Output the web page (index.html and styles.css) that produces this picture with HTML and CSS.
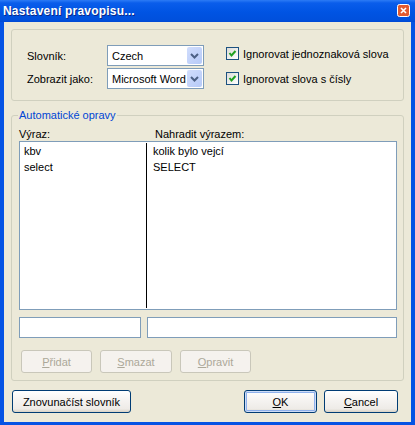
FILE: index.html
```html
<!DOCTYPE html>
<html>
<head>
<meta charset="utf-8">
<link rel="stylesheet" href="styles.css">
</head>
<body>
<div class="window">
  <div class="titlebar">
    <span class="title">Nastavení pravopisu...</span>
    <div class="close"><svg width="13" height="13" viewBox="0 0 13 13"><rect x="0.5" y="0.5" width="12" height="12" rx="2" fill="#E25A2F" stroke="#FFFFFF" stroke-width="1"/><path d="M4 4 L9 9 M9 4 L4 9" stroke="#FFFFFF" stroke-width="1.6"/></svg></div>
  </div>
  <div class="client">
    <div class="group top">
      <div class="fields">
        <div class="field">
          <span class="lbl">Slovník:</span>
          <div class="combo"><span class="val">Czech</span><span class="arrow"><svg width="15" height="19" viewBox="0 0 15 19"><path d="M4 8 L7.5 11.5 L11 8" fill="none" stroke="#4D6185" stroke-width="2"/></svg></span></div>
        </div>
        <div class="field">
          <span class="lbl">Zobrazit jako:</span>
          <div class="combo"><span class="val">Microsoft Word</span><span class="arrow"><svg width="15" height="19" viewBox="0 0 15 19"><path d="M4 8 L7.5 11.5 L11 8" fill="none" stroke="#4D6185" stroke-width="2"/></svg></span></div>
        </div>
      </div>
      <div class="checks">
        <div class="check"><span class="box"><svg width="13" height="13" viewBox="0 0 13 13"><path d="M3.5 6 L5.5 8.5 L9.5 4" fill="none" stroke="#21A121" stroke-width="2"/></svg></span><span>Ignorovat jednoznaková slova</span></div>
        <div class="check"><span class="box"><svg width="13" height="13" viewBox="0 0 13 13"><path d="M3.5 6 L5.5 8.5 L9.5 4" fill="none" stroke="#21A121" stroke-width="2"/></svg></span><span>Ignorovat slova s čísly</span></div>
      </div>
    </div>
    <fieldset class="group auto">
      <legend>Automatické opravy</legend>
      <div class="heads"><span class="h1">Výraz:</span><span>Nahradit výrazem:</span></div>
      <div class="list">
        <div class="col left"><div class="row">kbv</div><div class="row">select</div></div>
        <div class="divider"></div>
        <div class="col right"><div class="row">kolik bylo vejcí</div><div class="row">SELECT</div></div>
      </div>
      <div class="inputs"><div class="input i1"></div><div class="input i2"></div></div>
      <div class="btns">
        <button class="btn dis b1" disabled><u>P</u>řidat</button>
        <button class="btn dis b2" disabled><u>S</u>mazat</button>
        <button class="btn dis b3" disabled><u>O</u>pravit</button>
      </div>
    </fieldset>
    <div class="footer">
      <button class="btn reload">Znovunačíst slovník</button>
      <div class="spacer"></div>
      <button class="btn default ok"><u>O</u>K</button>
      <button class="btn cancel"><u>C</u>ancel</button>
    </div>
  </div>
</div>
</body>
</html>
```
FILE: styles.css
```css
* { box-sizing: border-box; }
html, body { margin: 0; padding: 0; }
body {
  font-family: "Liberation Sans", Arial, sans-serif;
  font-size: 11px;
  color: #000;
  background: #ECE9D8;
}
.window {
  width: 415px;
  height: 425px;
  display: flex;
  flex-direction: column;
  background: #0553E4;
}
.titlebar {
  height: 22px;
  flex: none;
  display: flex;
  align-items: center;
  padding: 0 5px 0 3px;
  background: linear-gradient(#2C7BF5 0px, #0A5DEB 3px, #0054E3 12px, #0050DC 20px, #0048D4 22px);
}
.title {
  flex: 1;
  color: #fff;
  font-weight: bold;
  font-size: 12px;
  letter-spacing: 0.2px;
  text-shadow: 1px 1px 0 #0A2A8A;
}
.close {
  width: 13px;
  height: 13px;
  flex: none;
  margin-top: -1px;
}
.close svg { display: block; }
.client {
  flex: 1;
  margin: 0 4px 3px 4px;
  background: #ECE9D8;
  padding: 7px 7px 0 7px;
  display: flex;
  flex-direction: column;
}
.group {
  border: 1px solid #D0D0BF;
  border-radius: 3px;
}
.group.top {
  height: 72px;
  padding: 15px 0 0 15px;
  display: flex;
}
.fields {
  display: flex;
  flex-direction: column;
  gap: 2px;
}
.field {
  display: flex;
  align-items: center;
  height: 21px;
}
.lbl { width: 80px; }
.combo {
  width: 97px;
  height: 21px;
  border: 1px solid #7F9DB9;
  background: #fff;
  display: flex;
  align-items: center;
}
.combo .val { flex: 1; padding-left: 4px; white-space: nowrap; overflow: hidden; }
.arrow {
  width: 15px;
  height: 17px;
  margin: 0 1px 0 0;
  border-radius: 2px;
  background: linear-gradient(135deg, #D1DDFC, #B6CAF8);
  display: flex;
  align-items: center;
  justify-content: center;
  overflow: hidden;
}
.arrow svg { display: block; }
.checks {
  margin-left: 22px;
  margin-top: 2px;
  display: flex;
  flex-direction: column;
  gap: 12px;
}
.check {
  display: flex;
  align-items: center;
  height: 13px;
  white-space: nowrap;
}
.box {
  width: 13px;
  height: 13px;
  border: 1px solid #1C5180;
  background: linear-gradient(135deg, #DCDCD7, #FFFFFF);
  margin-right: 4px;
  display: flex;
}
.box svg { display: block; margin: -1px; }
fieldset.auto {
  margin: 8px 0 0 0;
  padding: 0 6px 7px 7px;
  min-inline-size: 0;
}
legend {
  color: #0046D5;
  padding: 0 1px;
  margin-left: -1px;
  line-height: 13px;
}
.heads {
  display: flex;
  padding-top: 5px;
  line-height: 14px;
  height: 19px;
}
.h1 { width: 136px; }
.list {
  height: 169px;
  border: 1px solid #7F9DB9;
  background: #fff;
  display: flex;
}
.col { padding-top: 1px; }
.col.left { width: 126px; padding-left: 4px; }
.col.right { flex: 1; padding-left: 6px; }
.row { line-height: 16px; height: 16px; white-space: nowrap; }
.divider {
  width: 1px;
  background: #000;
  margin: 1px 0;
}
.inputs {
  display: flex;
  gap: 6px;
  margin-top: 7px;
}
.input {
  height: 21px;
  border: 1px solid #7F9DB9;
  background: #fff;
}
.i1 { width: 122px; }
.i2 { width: 250px; }
.btns {
  display: flex;
  gap: 8px;
  margin-top: 12px;
  padding-left: 2px;
}
.btn {
  font-family: "Liberation Sans", Arial, sans-serif;
  font-size: 11px;
  height: 23px;
  padding: 0;
  border: 1px solid #003C74;
  border-radius: 3px;
  background: linear-gradient(#FFFFFF 0%, #F6F4F2 40%, #EEEBE7 85%, #D8D2C6 100%);
  color: #000;
}
.btn u { text-decoration: underline; }
.btn.dis {
  border-color: #C9C7BA;
  background: #F5F2EE;
  color: #ACA899;
}
.b1 { width: 71px; }
.b2 { width: 72px; }
.b3 { width: 71px; }
.footer {
  display: flex;
  margin-top: 9px;
  gap: 7px;
}
.reload { width: 119px; margin-left: 1px; }
.spacer { flex: 1; }
.ok { width: 73px; }
.cancel { width: 74px; margin-right: 6px; }
.btn.default {
  box-shadow: inset 0 0 0 1px #CEDCF6, inset 0 0 0 2px #8FB1EC;
}
```
